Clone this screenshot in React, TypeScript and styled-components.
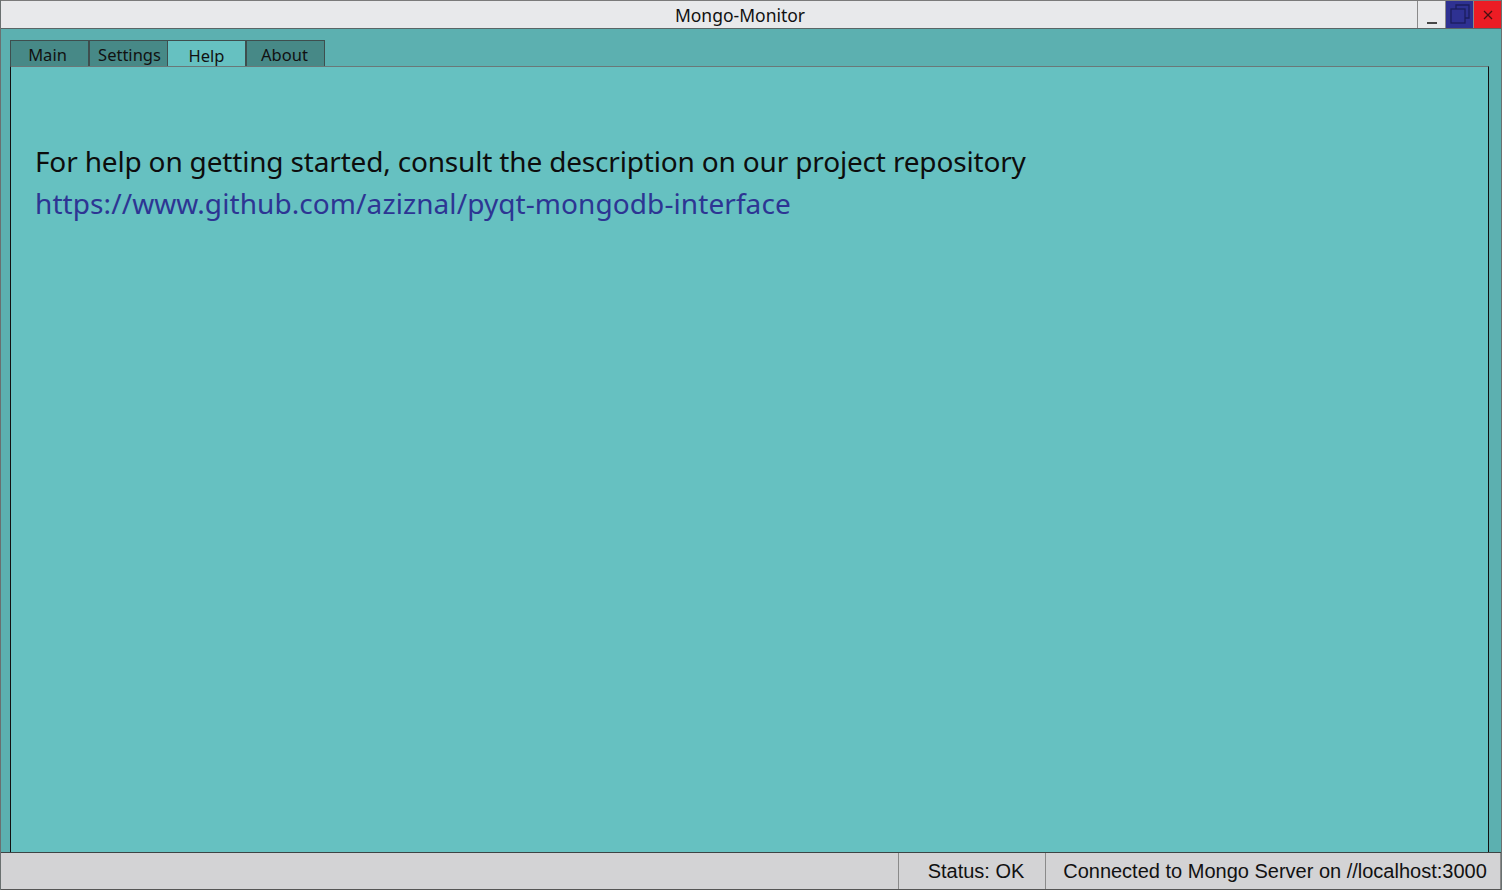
import React from "react";
import styled, { createGlobalStyle } from "styled-components";

const Global = createGlobalStyle`
  html, body { margin: 0; padding: 0; width: 1502px; height: 890px; overflow: hidden; background: #5cb0b0; }
  * { box-sizing: border-box; }
`;

const Window = styled.div`
  width: 1502px;
  height: 890px;
  display: flex;
  flex-direction: column;
  border-left: 1px solid #6a7070;
  border-right: 1px solid #6a7070;
  background: #5cb0b0;
  font-family: "Noto Sans", "Open Sans", sans-serif;
`;

const TitleBar = styled.div`
  height: 29px;
  flex: none;
  display: flex;
  background: #e8e9eb;
  border-top: 1px solid #7a7a7a;
  border-bottom: 1px solid #5a6666;
`;

const Title = styled.div`
  flex: 1;
  display: flex;
  align-items: center;
  justify-content: center;
  padding-left: 62px;
  font-size: 17.5px;
  color: #111;
`;

const WinButton = styled.div<{ $bg: string }>`
  width: 28px;
  height: 100%;
  background: ${(p) => p.$bg};
  border-left: 1px solid #8a8a8a;
  display: flex;
  align-items: center;
  justify-content: center;
`;

const Body = styled.div`
  flex: 1;
  display: flex;
  flex-direction: column;
  padding: 11px 12px 0 9px;
  min-height: 0;
`;

const TabRow = styled.div`
  display: flex;
  height: 27px;
  flex: none;
`;

const Tab = styled.div<{ $active?: boolean; $w: number; $shift: number }>`
  width: ${(p) => p.$w}px;
  height: 27px;
  display: flex;
  align-items: center;
  justify-content: center;
  padding-top: 2px;
  padding-right: ${(p) => (p.$shift < 0 ? -p.$shift * 2 : 0)}px;
  padding-left: ${(p) => (p.$shift > 0 ? p.$shift * 2 : 0)}px;
  font-size: 16.5px;
  color: #111;
  background: ${(p) => (p.$active ? "#66c1c1" : "#478987")};
  border: 1px solid #3e4e4e;
  border-bottom: ${(p) => (p.$active ? "none" : "1px solid #3e4e4e")};
  border-left: ${(p) => (p.$active ? "none" : "1px solid #3e4e4e")};
  &:first-child { border-left: 1px solid #3e4e4e; }
`;

const Pane = styled.div`
  flex: 1;
  background: #66c1c1;
  border-left: 1px solid #111;
  border-right: 1px solid #111;
  border-top: 1px solid #6a7878;
  margin-top: -1px;
  padding: 73px 0 0 24px;
`;

const HelpText = styled.div`
  font-size: 28px;
  letter-spacing: -0.17px;
  line-height: 42px;
  color: #0d0d0d;
`;

const Link = styled.a`
  display: block;
  font-size: 28px;
  letter-spacing: 0.08px;
  line-height: 42px;
  color: #2d3593;
  text-decoration: none;
`;

const StatusBar = styled.div`
  height: 38px;
  flex: none;
  display: flex;
  background: #d3d3d5;
  border-top: 1px solid #3c4444;
  border-bottom: 1px solid #555;
  font-family: "Liberation Sans", Arial, sans-serif;
  font-size: 20px;
  color: #111;
`;

const StatusSection = styled.div<{ $w?: number; $pad?: number }>`
  ${(p) => (p.$w ? `width: ${p.$w}px;` : "flex: 1;")}
  display: flex;
  align-items: center;
  justify-content: center;
  padding-left: ${(p) => p.$pad ?? 0}px;
  border-left: 1px solid #8a8a8a;
  border-right: 1px solid #8a8a8a;
  margin-left: -1px;
  &:first-child { border-left: none; margin-left: 0; }
`;

export default function App() {
  return (
    <>
      <Global />
      <Window>
        <TitleBar>
          <Title>Mongo-Monitor</Title>
          <WinButton $bg="#e8e9eb">
            <svg width="14" height="20" viewBox="0 0 14 20">
              <line x1="2" y1="18" x2="12" y2="18" stroke="#111" strokeWidth="1.5" />
            </svg>
          </WinButton>
          <WinButton $bg="#2e3192">
            <svg width="24" height="24" viewBox="0 0 24 24">
              <polyline points="8,6 8,2 21,2 21,15 17,15" fill="none" stroke="#1b1d5c" strokeWidth="1.3" />
              <rect x="3" y="6" width="14" height="14" fill="#2e3192" stroke="#1b1d5c" strokeWidth="1.3" />
            </svg>
          </WinButton>
          <WinButton $bg="#ec1c24">
            <svg width="12" height="12" viewBox="0 0 12 12">
              <line x1="2" y1="2" x2="10" y2="10" stroke="#4a1010" strokeWidth="1.2" />
              <line x1="10" y1="2" x2="2" y2="10" stroke="#4a1010" strokeWidth="1.2" />
            </svg>
          </WinButton>
        </TitleBar>
        <Body>
          <TabRow>
            <Tab $w={79} $shift={-2}>Main</Tab>
            <Tab $w={79} $shift={1}>Settings</Tab>
            <Tab $w={78} $shift={0} $active>Help</Tab>
            <Tab $w={79} $shift={-1}>About</Tab>
          </TabRow>
          <Pane>
            <HelpText>For help on getting started, consult the description on our project repository</HelpText>
            <Link href="#">https://www.github.com/aziznal/pyqt-mongodb-interface</Link>
          </Pane>
        </Body>
        <StatusBar>
          <StatusSection />
          <StatusSection $w={148} $pad={8}>Status: OK</StatusSection>
          <StatusSection $w={456} $pad={4}>Connected to Mongo Server on //localhost:3000</StatusSection>
        </StatusBar>
      </Window>
    </>
  );
}
